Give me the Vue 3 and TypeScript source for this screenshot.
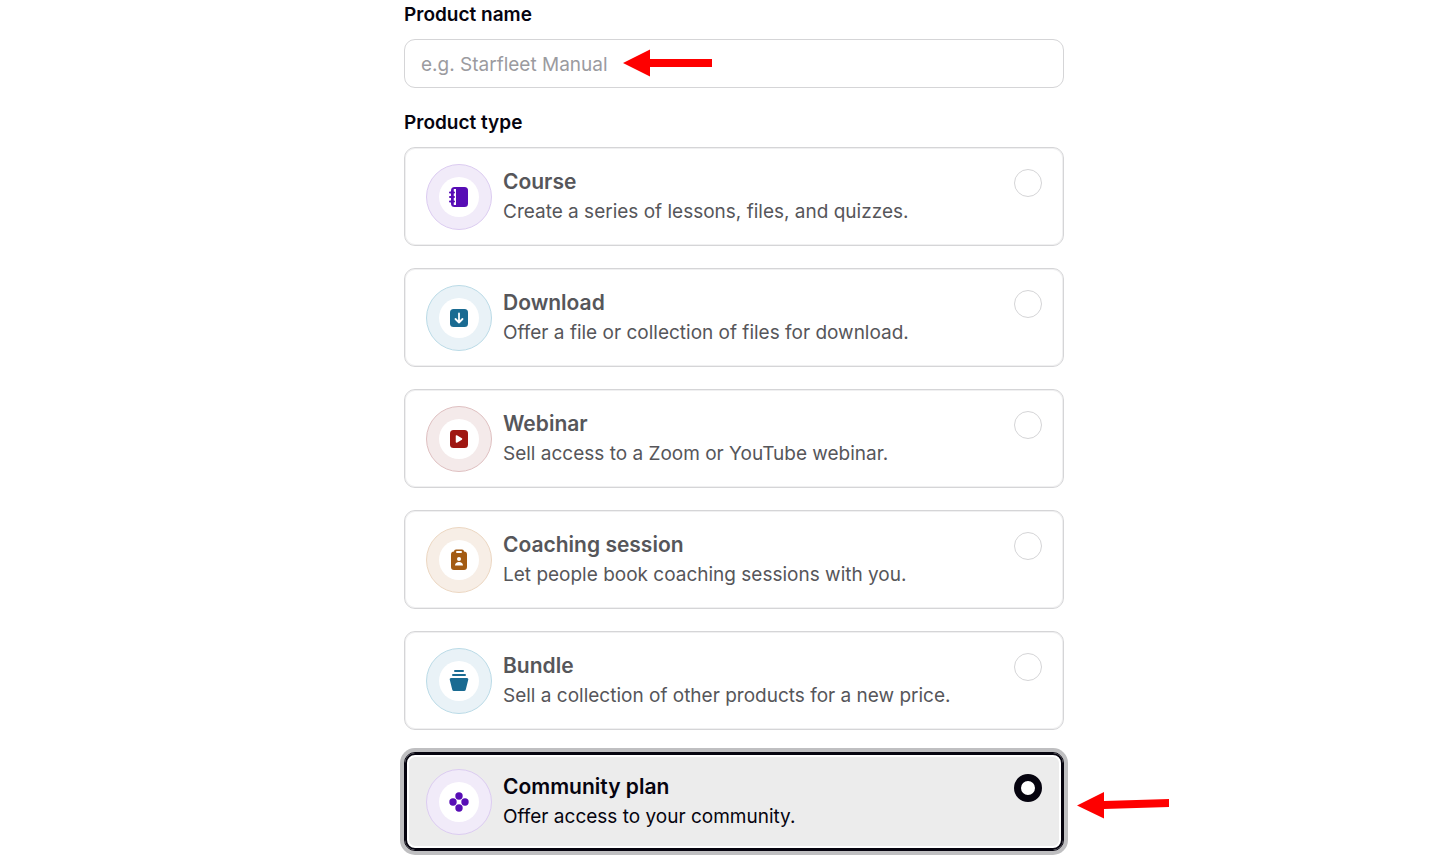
<script setup lang="ts">
import { ref } from 'vue'

type IconName = 'notebook' | 'download' | 'play' | 'badge' | 'basket' | 'dots'

interface ProductType {
  id: string
  title: string
  description: string
  icon: IconName
  tone: string
}

const productTypes: ProductType[] = [
  { id: 'course', title: 'Course', description: 'Create a series of lessons, files, and quizzes.', icon: 'notebook', tone: 'purple' },
  { id: 'download', title: 'Download', description: 'Offer a file or collection of files for download.', icon: 'download', tone: 'blue' },
  { id: 'webinar', title: 'Webinar', description: 'Sell access to a Zoom or YouTube webinar.', icon: 'play', tone: 'red' },
  { id: 'coaching', title: 'Coaching session', description: 'Let people book coaching sessions with you.', icon: 'badge', tone: 'orange' },
  { id: 'bundle', title: 'Bundle', description: 'Sell a collection of other products for a new price.', icon: 'basket', tone: 'blue' },
  { id: 'community', title: 'Community plan', description: 'Offer access to your community.', icon: 'dots', tone: 'purple' },
]

const productName = ref('')
const selected = ref('community')
</script>

<template>
  <main class="page">
    <form class="form" @submit.prevent>
      <label class="heading" for="product-name">Product name</label>
      <div class="field">
        <input id="product-name" v-model="productName" class="text-input" type="text" placeholder="e.g. Starfleet Manual" />
        <svg class="arrow arrow-field" width="89" height="28" viewBox="0 0 89 28" aria-hidden="true">
          <path d="M0 14 27 .5V10h62v8H27v9.500z" fill="#fe0000" />
        </svg>
      </div>

      <fieldset class="types">
        <legend class="heading">Product type</legend>
        <div class="cards">
          <label
            v-for="item in productTypes"
            :key="item.id"
            class="card"
            :class="{ selected: selected === item.id }"
            :for="item.id"
          >
            <span class="icon" :class="item.tone">
              <span class="icon-core">
                <svg width="20" height="22" viewBox="0 0 20 22" fill="currentColor" aria-hidden="true">
                  <template v-if="item.icon === 'notebook'">
                    <rect x="2" y="1" width="17" height="20" rx="3.500" />
                    <rect x="5" y="3" width="2" height="16" fill="#fff" />
                    <rect x="4" y="3" width="1" height="16" fill="#fff" opacity=".25" />
                    <path d="M1 6.500h4M1 11h4M1 15.500h4" stroke="currentColor" stroke-width="2" stroke-linecap="round" />
                  </template>
                  <template v-else-if="item.icon === 'download'">
                    <rect x="1" y="2" width="18" height="18" rx="3.500" />
                    <path d="M10 6.500v9M6.500 12l3.500 3.500 3.500-3.500" fill="none" stroke="#fff" stroke-width="1.800" stroke-linecap="round" stroke-linejoin="round" />
                  </template>
                  <template v-else-if="item.icon === 'play'">
                    <rect x="1" y="2" width="18" height="18" rx="3.500" />
                    <path d="M7.500 8v6l5-3z" fill="#fff" stroke="#fff" stroke-width="1.500" stroke-linejoin="round" />
                  </template>
                  <template v-else-if="item.icon === 'badge'">
                    <path d="M5 2.500a2 2 0 0 1 2-2h6a2 2 0 0 1 2 2 3 3 0 0 1 3 3V18a3 3 0 0 1-3 3H5a3 3 0 0 1-3-3V5.500a3 3 0 0 1 3-3z" />
                    <rect x="7" y="2" width="6" height="2" rx="1" fill="#fff" />
                    <circle cx="10" cy="10" r="2" fill="#fff" />
                    <path d="M6 16.500c0-2.300 1.600-3.500 4-3.500s4 1.200 4 3.500z" fill="#fff" />
                  </template>
                  <template v-else-if="item.icon === 'basket'">
                    <rect x="5" y="0" width="10" height="2" rx="1" />
                    <rect x="3" y="4" width="14" height="2" rx="1" />
                    <path d="M2 8h16q1.500 0 1.300 1.500L16.800 19.500Q16.500 21 15 21H5q-1.500 0-1.800-1.500L.7 9.500Q.5 8 2 8z" />
                  </template>
                  <template v-else>
                    <circle cx="10" cy="5" r="3.700" />
                    <circle cx="4" cy="11" r="3.700" />
                    <circle cx="16" cy="11" r="3.700" />
                    <circle cx="10" cy="17" r="3.700" />
                  </template>
                </svg>
              </span>
            </span>
            <span class="copy">
              <span class="title">{{ item.title }}</span>
              <span class="description">{{ item.description }}</span>
            </span>
            <input :id="item.id" v-model="selected" class="radio" type="radio" name="product-type" :value="item.id" />
            <svg v-if="selected === item.id" class="arrow arrow-card" width="92" height="28" viewBox="0 0 92 28" aria-hidden="true">
              <path d="M0 14.500 27 1v9l65-2v8l-65 2v9.500z" fill="#fe0000" />
            </svg>
          </label>
        </div>
      </fieldset>
    </form>
  </main>
</template>

<style>
body {
  margin: 0;
  background: #fff;
}
</style>

<style scoped>
*,
*::before {
  box-sizing: border-box;
}

.page {
  padding: 0 0 10px 13px;
  font-family: Inter, "Liberation Sans", sans-serif;
  font-size: 19px;
  color: #06040f;
}

.form {
  max-width: 660px;
  margin: 0 auto;
}

.heading {
  display: block;
  padding: 0;
  font-weight: 600;
  line-height: 30px;
}

.field {
  position: relative;
  margin: 9px 0 20px;
}

.text-input {
  display: block;
  width: 100%;
  height: 49px;
  padding: 2px 16px 0;
  border: 1px solid #d5d5d7;
  border-radius: 11px;
  background: #fff;
  font: inherit;
  color: inherit;
}

.text-input::placeholder {
  color: #9b9b9f;
  opacity: 1;
}

.types {
  min-width: 0;
  margin: 0;
  padding: 0;
  border: 0;
}

.cards {
  display: grid;
  gap: 22px;
  margin-top: 9px;
}

.card {
  position: relative;
  display: flex;
  align-items: flex-start;
  gap: 11px;
  padding: 16px 21px 15px;
  border: 1px solid #d5d5d7;
  border-radius: 11px;
  box-shadow: inset 0 0 0 1px #f0f0f1;
  color: #56565a;
  cursor: pointer;
}

.card.selected {
  border-color: #06040f;
  background: #ececec;
  box-shadow: 0 0 0 4px #bfbfc1, inset 0 0 0 2px #06040f, inset 0 0 0 4px #fff;
  color: #06040f;
}

.icon {
  display: grid;
  flex: none;
  place-items: center;
  width: 66px;
  height: 66px;
  border: 1px solid;
  border-radius: 50%;
}

.icon-core {
  display: grid;
  place-items: center;
  width: 40px;
  height: 40px;
  border-radius: 50%;
  background: #fff;
}

.purple {
  border-color: #dcccf1;
  background: #f1ebf9;
  color: #570db5;
}

.blue {
  border-color: #bbdbe7;
  background: #e9f2f7;
  color: #1a6b92;
}

.red {
  border-color: #dfc0c1;
  background: #f4eaea;
  color: #9f1712;
}

.orange {
  border-color: #ecd7c2;
  background: #f7eee6;
  color: #a35b13;
}

.copy {
  display: grid;
  flex: 1;
  min-width: 0;
  padding-top: 3px;
  line-height: 30px;
}

.title {
  font-size: 21px;
  font-weight: 600;
}

.radio {
  flex: none;
  width: 28px;
  height: 28px;
  margin: 5px 0 0;
  border: 1px solid #d5d5d7;
  border-radius: 50%;
  background: #fff;
  appearance: none;
}

.radio:checked {
  border: 7px solid #06040f;
}

.arrow {
  position: absolute;
  pointer-events: none;
}

.arrow-field {
  top: 10px;
  left: 219px;
}

.arrow-card {
  top: 38px;
  left: calc(100% + 14px);
}
</style>
